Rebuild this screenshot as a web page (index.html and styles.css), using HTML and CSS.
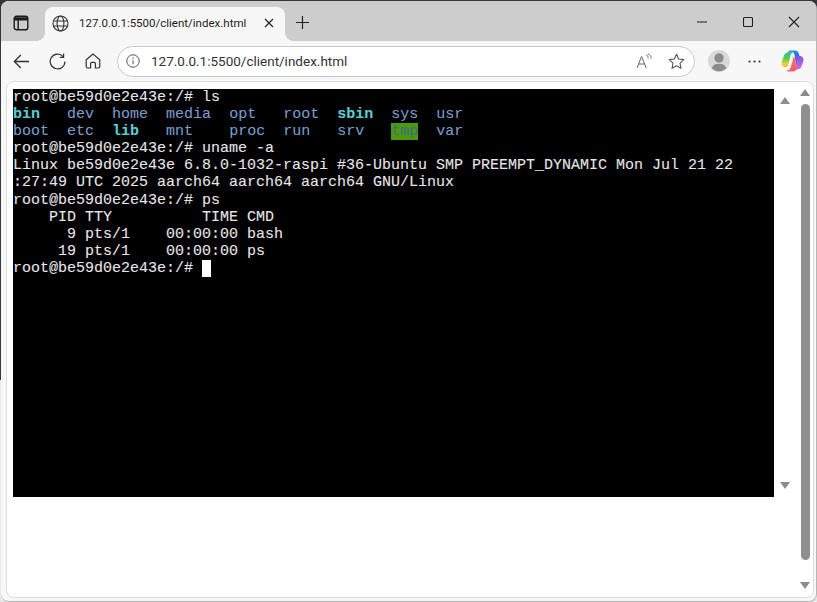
FILE: index.html
```html
<!DOCTYPE html>
<html lang="en">
<head>
<meta charset="utf-8">
<title>127.0.0.1:5500/client/index.html</title>
<link rel="stylesheet" href="styles.css">
</head>
<body>
<div class="window">
  <div class="tabstrip">
    <button class="tab-toggle" aria-label="Tab actions">
      <svg width="16" height="16" viewBox="0 0 16 16" fill="none" stroke="#1c1c1c" stroke-width="1.4"><rect x="1.2" y="1.2" width="13.6" height="13.6" rx="2.4"/><path d="M1.2 4.8H14.8M5.2 4.8V14.8" /><path d="M1.5 3.5h13" stroke-width="2.6"/></svg>
    </button>
    <div class="tab">
      <svg class="globe" width="17" height="17" viewBox="0 0 17 17" fill="none" stroke="#333" stroke-width="1.1"><circle cx="8.5" cy="8.5" r="7.5"/><ellipse cx="8.5" cy="8.5" rx="3.4" ry="7.5"/><path d="M1.4 6H15.6M1.4 11H15.6"/></svg>
      <span class="tab-title">127.0.0.1:5500/client/index.html</span>
      <svg class="tab-close" width="10" height="10" viewBox="0 0 10 10" stroke="#222" stroke-width="1.2"><path d="M1 1L9 9M9 1L1 9"/></svg>
    </div>
    <svg class="new-tab" width="15" height="15" viewBox="0 0 15 15" stroke="#222" stroke-width="1.2"><path d="M7.5 1V14M1 7.5H14"/></svg>
    <div class="win-controls">
      <svg width="12" height="12" viewBox="0 0 12 12" stroke="#222" stroke-width="1.1"><path d="M1 6H11"/></svg>
      <svg width="12" height="12" viewBox="0 0 12 12" fill="none" stroke="#222" stroke-width="1.1"><rect x="1.5" y="1.5" width="9" height="9" rx="1"/></svg>
      <svg width="12" height="12" viewBox="0 0 12 12" stroke="#222" stroke-width="1.1"><path d="M1 1L11 11M11 1L1 11"/></svg>
    </div>
  </div>

  <div class="toolbar">
    <svg class="nav-back" width="17" height="15" viewBox="0 0 17 15" fill="none" stroke="#333" stroke-width="1.3"><path d="M16 7.5H1.3M7.8 1L1.3 7.5L7.8 14"/></svg>
    <svg class="nav-reload" width="17" height="17" viewBox="0 0 17 17" fill="none" stroke="#333" stroke-width="1.2"><path d="M14.2 3.6A7.4 7.4 0 1 0 16 8.5"/><path d="M14.6 0.5V4.3H10.8"/></svg>
    <svg class="nav-home" width="16" height="16" viewBox="0 0 16 16" fill="none" stroke="#333" stroke-width="1.2"><path d="M1.2 6.8L8 1L14.8 6.8V13.5A1.5 1.5 0 0 1 13.3 15H10.4V10.6A1.3 1.3 0 0 0 9.100 9.3H6.900A1.300 1.300 0 0 0 5.600 10.600V15H2.700A1.500 1.500 0 0 1 1.200 13.500Z"/></svg>
    <div class="address">
      <svg class="info" width="14" height="14" viewBox="0 0 14 14" fill="none" stroke="#555" stroke-width="1"><circle cx="7" cy="7" r="6.200"/><path d="M7 6.200V10.300"/><path d="M7 3.600V4.800" stroke-width="1.300"/></svg>
      <span class="url">127.0.0.1:5500/client/index.html</span>
      <svg class="read-aloud" width="16" height="16" viewBox="0 0 16 16" fill="none" stroke="#666" stroke-width="1"><path d="M1 15L5.600 3.500L10.200 15M2.700 11H8.500"/><path d="M10 1.500C11.400 2.300 12.200 3.800 12.200 5.500M12 0.500C14 1.800 15.200 3.500 15.200 5.500" stroke-width="0.900"/></svg>
      <svg class="star" width="17" height="17" viewBox="0 0 17 17" fill="none" stroke="#555" stroke-width="1.100"><path d="M8.500 1.300L10.700 6L15.800 6.600L12 10.100L13 15.300L8.500 12.700L4 15.300L5 10.100L1.200 6.600L6.300 6Z" stroke-linejoin="round"/></svg>
    </div>
    <svg class="avatar" width="22" height="22" viewBox="0 0 22 22"><circle cx="11" cy="11" r="11" fill="#d9d9d9"/><circle cx="11" cy="8" r="4.700" fill="#8c8c8c"/><path d="M3.800 18.500C4.500 15 7.500 13.800 11 13.800S17.500 15 18.200 18.500A11 11 0 0 1 3.800 18.500Z" fill="#8c8c8c"/></svg>
    <svg class="more" width="13" height="3" viewBox="0 0 13 3" fill="#333"><circle cx="1.500" cy="1.500" r="1.100"/><circle cx="6.500" cy="1.500" r="1.100"/><circle cx="11.500" cy="1.500" r="1.100"/></svg>
    <svg class="copilot" width="23" height="22" viewBox="0 0 23 22" fill="none">
      <defs>
        <linearGradient id="cpBlue" x1="0" y1="0" x2="1" y2="1"><stop offset="0" stop-color="#1aa5e8"/><stop offset="1" stop-color="#2a5fe0"/></linearGradient>
        <linearGradient id="cpLeft" x1="0.500" y1="0" x2="0.500" y2="1"><stop offset="0" stop-color="#2fc09a"/><stop offset="0.450" stop-color="#5ccb4e"/><stop offset="0.800" stop-color="#f4d23a"/><stop offset="1" stop-color="#f3a63a"/></linearGradient>
        <linearGradient id="cpBottom" x1="0" y1="0" x2="1" y2="1"><stop offset="0" stop-color="#f4903a"/><stop offset="1" stop-color="#ef4f7c"/></linearGradient>
        <linearGradient id="cpRight" x1="0.300" y1="0" x2="0.700" y2="1"><stop offset="0" stop-color="#6a5ae6"/><stop offset="0.600" stop-color="#b45fe0"/><stop offset="1" stop-color="#f068a8"/></linearGradient>
      </defs>
      <path d="M8.500 0.500H14C16 0.500 17 1.500 17.600 3.300L19 7.500H14.500L13 3.800C12.500 2.500 11.200 1.800 10 2.200L7 3.200C7.300 1.500 7.800 0.500 8.500 0.500Z" fill="url(#cpBlue)"/>
      <path d="M7 2.300C8.500 1.800 10.500 1.800 11.800 3C10.500 3.200 9.800 4.300 9.400 5.800L7.500 14.500C7.100 16.200 6.200 17 4.500 17C1.800 17 0 15 0.700 12.300L3 5.500C3.700 3.500 5.200 2.600 7 2.300Z" fill="url(#cpLeft)"/>
      <path d="M11 6.500C12.300 6.500 13.300 7.500 13.700 9L15.800 17C16.200 19 14.800 21.500 12 21.500H6.500C5.800 21.500 5.300 21 5.800 20.600C8 20.200 9.200 19 9.800 17L11.800 10C12.200 8.500 12 7.300 11 6.500Z" fill="url(#cpBottom)"/>
      <path d="M14 6H18.500C21.300 6 23 8.300 22.500 11L20.500 16.500C19.800 18.300 18 19.500 16 19.500C15.300 19.500 15 19 15.200 18.500C15.800 17 15.600 16 15.200 14.500L13.700 8.500C13.500 7.500 13.700 6.500 14 6Z" fill="url(#cpRight)"/>
    </svg>
  </div>

  <div class="viewport">
    <div class="page">
      <pre class="terminal">root@be59d0e2e43e:/# ls
<span class="c-bold">bin</span>   <span class="c-blue">dev</span>  <span class="c-blue">home</span>  <span class="c-blue">media</span>  <span class="c-blue">opt</span>   <span class="c-blue">root</span>  <span class="c-bold">sbin</span>  <span class="c-blue">sys</span>  <span class="c-blue">usr</span>
<span class="c-blue">boot</span>  <span class="c-blue">etc</span>  <span class="c-bold">lib</span>   <span class="c-blue">mnt</span>    <span class="c-blue">proc</span>  <span class="c-blue">run</span>   <span class="c-blue">srv</span>   <span class="c-tmp">tmp</span>  <span class="c-blue">var</span>
root@be59d0e2e43e:/# uname -a
Linux be59d0e2e43e 6.8.0-1032-raspi #36-Ubuntu SMP PREEMPT_DYNAMIC Mon Jul 21 22
:27:49 UTC 2025 aarch64 aarch64 aarch64 GNU/Linux
root@be59d0e2e43e:/# ps
    PID TTY          TIME CMD
      9 pts/1    00:00:00 bash
     19 pts/1    00:00:00 ps
root@be59d0e2e43e:/# <span class="cursor"> </span></pre>
      <div class="inner-scroll">
        <span class="arrow up"></span>
        <span class="arrow down"></span>
      </div>
      <div class="outer-scroll">
        <span class="arrow up"></span>
        <span class="thumb"></span>
        <span class="arrow down"></span>
      </div>
    </div>
  </div>
</div>
</body>
</html>
```

FILE: styles.css
```css
* { box-sizing: border-box; }
html, body { margin: 0; padding: 0; }
body {
  width: 817px;
  height: 602px;
  overflow: hidden;
  background: linear-gradient(#33363a 0, #33363a 380px, #e8e8e8 380px);
}
svg { display: block; flex: none; }

.window {
  width: 816px;
  height: 601px;
  margin: 1px 0 0 1px;
  border-radius: 8px;
  border-right: 1px solid #b5b5b5;
  border-bottom: 1px solid #b5b5b5;
  overflow: hidden;
  display: flex;
  flex-direction: column;
  background: #f7f7f7;
  font-family: Roboto, "Open Sans", sans-serif;
}

.tabstrip {
  height: 40px;
  flex: none;
  display: flex;
  align-items: flex-end;
  background: #cdcdcd;
}
.tab-toggle {
  width: 44px;
  height: 40px;
  border: 0;
  padding: 14px 0 0 12px;
  background: none;
  display: flex;
  align-items: flex-start;
}
.tab {
  width: 240px;
  height: 34px;
  display: flex;
  align-items: center;
  position: relative;
  background: #f7f7f7;
  border-radius: 8px 8px 0 0;
  padding: 0 11px 2px 7px;
  color: #1c1c1c;
}
.tab::before,
.tab::after {
  content: "";
  position: absolute;
  bottom: 0;
  width: 8px;
  height: 8px;
}
.tab::before {
  left: -8px;
  background: radial-gradient(circle at 0 0, #cdcdcd 7.5px, #f7f7f7 8px);
}
.tab::after {
  right: -8px;
  background: radial-gradient(circle at 100% 0, #cdcdcd 7.5px, #f7f7f7 8px);
}
.tab-title {
  margin-left: 10px;
  font-size: 11.500px;
  white-space: nowrap;
}
.tab-close { margin-left: auto; }
.new-tab { margin: 0 0 11px 10px; }
.win-controls {
  margin-left: auto;
  margin-right: 16px;
  margin-bottom: 13px;
  display: flex;
  gap: 34px;
}

.toolbar {
  height: 40px;
  flex: none;
  display: flex;
  align-items: center;
  padding-left: 12px;
  background: #f7f7f7;
}
.nav-reload { margin-left: 19px; }
.nav-home { margin-left: 19px; }
.address {
  width: 578px;
  height: 31px;
  margin-left: 16px;
  padding: 0 9px 0 8px;
  display: flex;
  align-items: center;
  background: #fff;
  border: 1px solid #c9c9c9;
  border-radius: 16px;
}
.url {
  margin-left: 11px;
  font-size: 13.500px;
  color: #333;
  white-space: nowrap;
}
.read-aloud { margin-left: auto; }
.star { margin-left: 16px; }
.avatar { margin-left: 13px; }
.more { margin-left: 18px; }
.copilot { margin-left: 20px; }

.viewport {
  flex: 1;
  padding: 0 2px 3px 5px;
  min-height: 0;
}
.page {
  height: 100%;
  display: flex;
  padding: 7px 0 0 6px;
  background: #fff;
  border: 1px solid #dcdcdc;
  border-radius: 8px;
}
.terminal {
  width: 761px;
  height: 408px;
  margin: 0;
  flex: none;
  overflow: hidden;
  background: #000;
  color: #e6e6e6;
  font-family: "Liberation Mono", "DejaVu Sans Mono", monospace;
  font-size: 15px;
  line-height: 17.100px;
  -webkit-text-stroke: 0.100px currentColor;
}
.c-blue { color: #7a9ccc; }
.c-bold { color: #58cdd2; font-weight: bold; }
.c-tmp { background: #4e9a06; color: #3f6f8c; }
.cursor { display: inline-block; width: 9px; height: 17px; background: #fff; vertical-align: top; }

.inner-scroll {
  width: 25px;
  height: 408px;
  flex: none;
  display: flex;
  flex-direction: column;
  justify-content: space-between;
  align-items: center;
  padding: 8px 3px 8px 0;
}
.outer-scroll {
  width: 12px;
  flex: none;
  height: 100%;
  display: flex;
  flex-direction: column;
  align-items: center;
  padding: 0 0 8px 0;
}
.arrow {
  width: 0;
  height: 0;
  border-left: 5px solid transparent;
  border-right: 5px solid transparent;
  flex: none;
}
.arrow.up { border-bottom: 7px solid #8c8c8c; }
.arrow.down { border-top: 7px solid #8c8c8c; }
.thumb {
  width: 9px;
  height: 456px;
  margin: 8px 0 22px;
  border-radius: 5px;
  background: #8f8f8f;
}
```
